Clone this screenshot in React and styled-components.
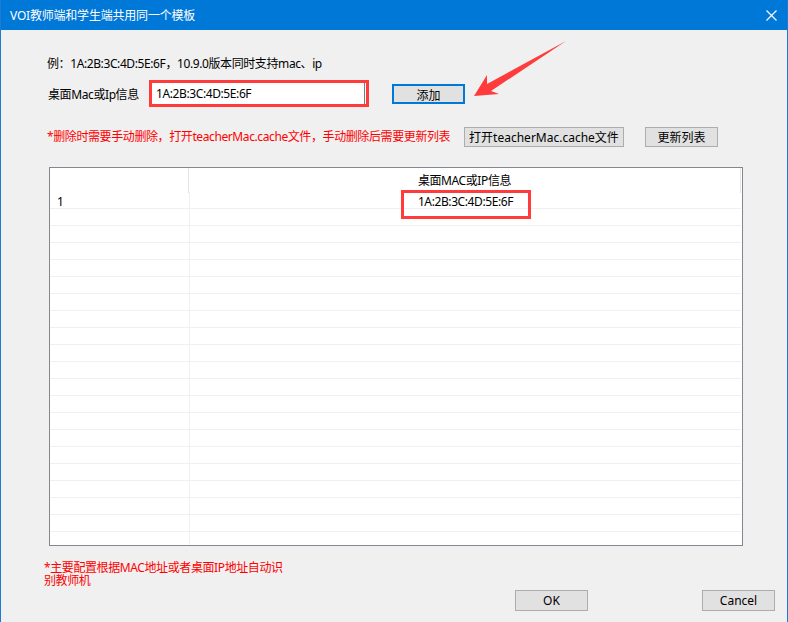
import React from 'react';
import styled, { createGlobalStyle } from 'styled-components';

const GlobalStyle = createGlobalStyle`
  html, body {
    margin: 0;
    padding: 0;
    background: #f0f0f0;
  }
  body {
    font-family: "Noto Sans", "Noto Sans CJK SC", sans-serif;
    font-size: 12px;
    color: #000;
  }
`;

const Window = styled.div`
  position: relative;
  width: 788px;
  height: 622px;
  box-sizing: border-box;
  display: flex;
  flex-direction: column;
  background: #f0f0f0;
  border-left: 1px solid #1f7ad6;
  border-right: 1px solid #1f7ad6;
  overflow: hidden;
`;

const TitleBar = styled.div`
  height: 30px;
  flex: none;
  display: flex;
  align-items: center;
  justify-content: space-between;
  padding: 0 10px 0 9px;
  background: #0078d7;
  color: #fff;
  font-size: 12px;
  letter-spacing: -0.2px;
`;

const Body = styled.div`
  flex: 1;
  display: flex;
  flex-direction: column;
  padding: 26px 12px 0 46px;
  letter-spacing: -0.4px;
`;

const ExampleLine = styled.div`
  height: 16px;
  line-height: 16px;
  white-space: nowrap;
`;

const FieldRow = styled.div`
  margin-top: 8px;
  height: 27px;
  padding-left: 1px;
  display: flex;
  align-items: center;
`;

const Label = styled.div`
  width: 101px;
  white-space: nowrap;
`;

const InputFrame = styled.div`
  width: 220px;
  height: 27px;
  box-sizing: border-box;
  border: 3px solid #ff3b3b;
  background: #fff;
  display: flex;
`;

const TextInput = styled.input`
  flex: 1;
  min-width: 0;
  margin: 0 1px 0 0;
  padding: 0 0 0 4px;
  border: none;
  border-right: 1px solid #7a7a7a;
  background: #fff;
  font: inherit;
  font-size: 12px;
  letter-spacing: -0.4px;
  color: #000;
  outline: none;
`;

const Button = styled.button`
  width: ${p => p.$width || 73}px;
  height: ${p => p.$height || 20}px;
  box-sizing: border-box;
  margin: 0;
  margin-left: ${p => p.$ml || 0}px;
  margin-right: ${p => p.$mr || 0}px;
  padding: 0;
  background: #e1e1e1;
  border: ${p => (p.$focused ? '2px solid #0078d7' : '1px solid #adadad')};
  font: inherit;
  font-size: 12px;
  color: #000;
  white-space: nowrap;
`;

const NoteRow = styled.div`
  margin-top: 20px;
  height: 20px;
  display: flex;
  align-items: center;
`;

const RedNote = styled.div`
  width: ${p => p.$width || 'auto'};
  margin-top: ${p => p.$mt || 0}px;
  margin-left: ${p => p.$ml || 0}px;
  color: #ff0000;
  line-height: ${p => p.$lh || 16}px;
  white-space: nowrap;
`;

const Table = styled.div`
  position: relative;
  margin: 20px 0 0 2px;
  width: 694px;
  height: 379px;
  box-sizing: border-box;
  border: 1px solid #828790;
  background: #fff;
  overflow: hidden;
`;

const HeaderRow = styled.div`
  display: grid;
  grid-template-columns: 139px 552px;
  height: 24px;
`;

const HeaderCell = styled.div`
  border-right: 1px solid #e5e5e5;
  text-align: center;
  line-height: 24px;
  padding-top: 1px;
  box-sizing: border-box;
`;

const Row = styled.div`
  display: grid;
  grid-template-columns: 140px 551px;
`;

const Cell = styled.div`
  height: 17px;
  box-sizing: border-box;
  border-bottom: 1px solid #f0f0f0;
  border-right: ${p => (p.$first ? '1px solid #f0f0f0' : 'none')};
  padding: 2px 0 0 ${p => (p.$first ? 7 : 0)}px;
  text-align: ${p => (p.$first ? 'left' : 'center')};
  line-height: 15px;
  white-space: nowrap;
`;

const Highlight = styled.div`
  position: absolute;
  left: 351px;
  top: 22px;
  width: 130px;
  height: 29px;
  box-sizing: border-box;
  border: 3px solid #ff3b3b;
  pointer-events: none;
`;

const Footer = styled.div`
  margin-top: 3px;
  display: flex;
  justify-content: flex-end;
`;

const Overlay = styled.svg`
  position: absolute;
  left: -1px;
  top: 0;
  pointer-events: none;
`;

const CloseIcon = () => (
  <svg width="11" height="11" viewBox="0 0 11 11">
    <path d="M0.5 0.5 L10.5 10.5 M10.5 0.5 L0.5 10.5" stroke="#fff" strokeWidth="1.2" fill="none" />
  </svg>
);

const rows = Array.from({ length: 22 }, (_, i) => i);

export default function App() {
  return (
    <>
      <GlobalStyle />
      <Window>
        <TitleBar>
          <span>VOI教师端和学生端共用同一个模板</span>
          <CloseIcon />
        </TitleBar>
        <Body>
          <ExampleLine>例：1A:2B:3C:4D:5E:6F，10.9.0版本同时支持mac、ip</ExampleLine>
          <FieldRow>
            <Label>桌面Mac或Ip信息</Label>
            <InputFrame>
              <TextInput defaultValue="1A:2B:3C:4D:5E:6F" readOnly />
            </InputFrame>
            <Button $focused $ml={23}>添加</Button>
          </FieldRow>
          <NoteRow>
            <RedNote $width="417px">*删除时需要手动删除，打开teacherMac.cache文件，手动删除后需要更新列表</RedNote>
            <Button $width={160}>打开teacherMac.cache文件</Button>
            <Button $ml={21}>更新列表</Button>
          </NoteRow>
          <Table>
            <HeaderRow>
              <HeaderCell />
              <HeaderCell>桌面MAC或IP信息</HeaderCell>
            </HeaderRow>
            {rows.map(i => (
              <Row key={i}>
                <Cell $first>{i === 0 ? '1' : ''}</Cell>
                <Cell>{i === 0 ? '1A:2B:3C:4D:5E:6F' : ''}</Cell>
              </Row>
            ))}
            <Highlight />
          </Table>
          <RedNote $ml={-3} $lh={13} $mt={15}>
            *主要配置根据MAC地址或者桌面IP地址自动识<br />别教师机
          </RedNote>
          <Footer>
            <Button $height={21} $mr={114}>OK</Button>
            <Button $height={21}>Cancel</Button>
          </Footer>
        </Body>
        <Overlay width="788" height="622" viewBox="0 0 788 622">
          <polygon
            points="474,96 487,75 487,84 566,41 491,91 499,94"
            fill="#ff3b3b"
          />
        </Overlay>
      </Window>
    </>
  );
}
